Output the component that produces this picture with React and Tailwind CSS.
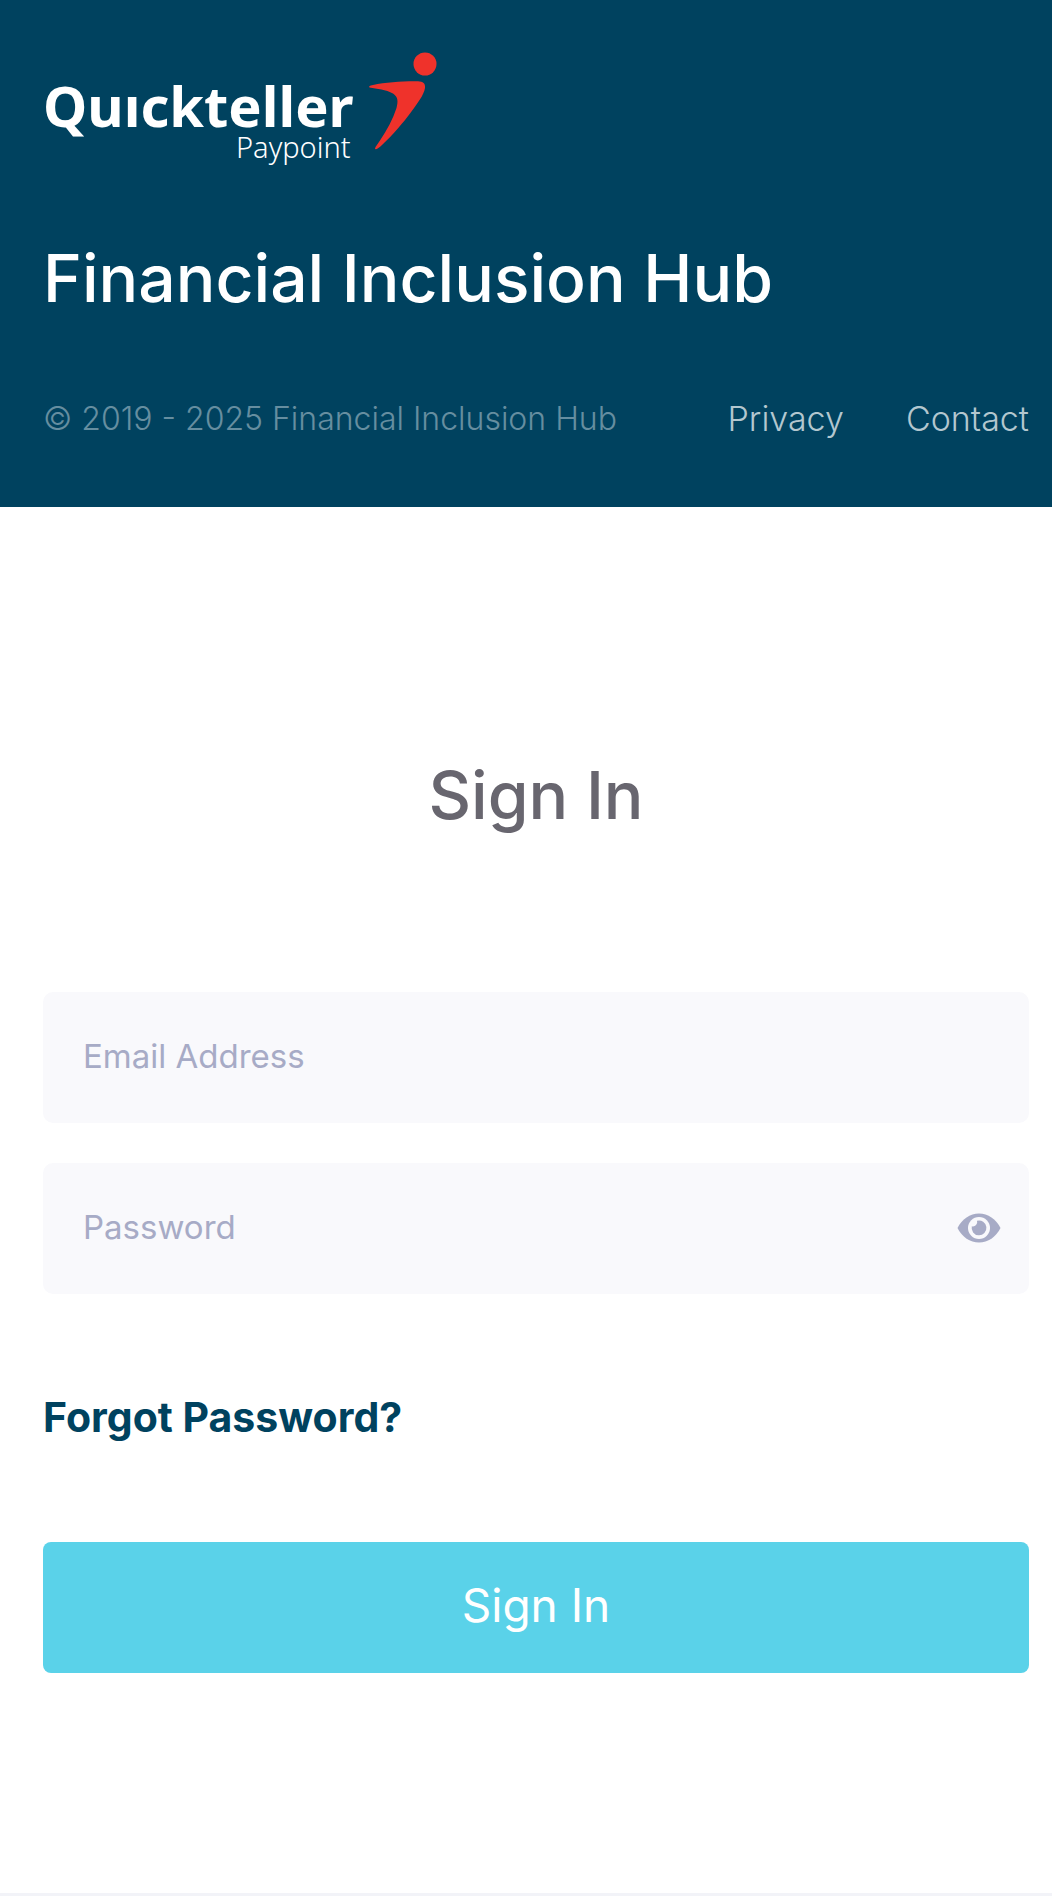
import { useState } from "react";

function Logo() {
  return (
    <svg viewBox="0 0 396 114" className="block h-[114px] w-[396px]" role="img" aria-label="Quickteller Paypoint">
      <text x="0" y="75" fill="#fff" fontFamily="'Noto Sans', sans-serif" fontWeight="700" fontSize="56">
        Quıckteller
      </text>
      <text x="193" y="106" fill="#fff" fontFamily="'Noto Sans', sans-serif" fontWeight="300" fontSize="29">
        Paypoint
      </text>
      <circle cx="382" cy="12" r="11.5" fill="#ef322b" />
      <path
        d="M326.5 35.5 C325.500 34.500 326.500 33.500 330 33 C343 30 360 29 375 29.200 C380 29.500 382.500 31 382 36 C381 43 374 52 367 61.500 C361 69.500 350 83 339 93 C335.500 96.500 332 98.500 332 96.500 C332.500 94.500 335 91.500 337 88.500 C344 78 350 67 353.500 56 C355 50 355.500 45 350 41.500 C343 37.500 334 37 326.500 35.500 Z"
        fill="#ef322b"
      />
    </svg>
  );
}

function EyeIcon() {
  return (
    <svg viewBox="0 0 44 30" className="block h-[30px] w-[44px]" aria-hidden="true">
      <path d="M.5 15 C5 6 13 .5 22 .5 S39 6 43.500 15 C39 24 31 29.500 22 29.500 S5 24 .5 15 Z" fill="#a7abc6" />
      <circle cx="22" cy="15" r="11" fill="#f9f9fc" />
      <path d="M20 7.800 A7.400 7.400 0 1 1 14.800 13.300 A4.300 4.300 0 0 0 20 7.800 Z" fill="#a7abc6" />
    </svg>
  );
}

const fieldClass =
  "block h-[131px] w-full rounded-[10px] bg-[#f9f9fc] pb-1 pl-10 text-[33px] text-[#3f4254] outline-none placeholder:text-[#a7abc6] placeholder:opacity-100";

export default function App() {
  const [visible, setVisible] = useState(false);
  return (
    <div className="min-h-screen bg-white font-['Inter',sans-serif]">
      <header className="bg-[#00425f] pt-[52px] pr-[23px] pb-16 pl-[43px]">
        <Logo />
        <h1 className="mt-[76px] text-[66px] leading-[72px] font-medium whitespace-nowrap text-white">
          Financial Inclusion Hub
        </h1>
        <div className="mt-[81px] flex items-center justify-between text-[32px] leading-[48px] font-light whitespace-nowrap">
          <span className="text-[#668ea0]">© 2019 - 2025 Financial Inclusion Hub</span>
          <nav className="flex gap-[62px] text-[34px] text-[#b3c7cf]">
            <a href="#privacy">Privacy</a>
            <a href="#contact">Contact</a>
          </nav>
        </div>
      </header>
      <main className="border-b-[3px] border-[#f2f3f8] pt-[252px] pr-[23px] pb-[220px] pl-[43px]">
        <h2 className="text-center text-[66px] leading-[72px] font-medium text-[#68666f]">Sign In</h2>
        <form className="mt-[161px]" onSubmit={(e) => e.preventDefault()}>
          <input type="email" aria-label="Email Address" placeholder="Email Address" className={fieldClass + " pr-10"} />
          <div className="relative mt-10">
            <input
              type={visible ? "text" : "password"}
              aria-label="Password"
              placeholder="Password"
              className={fieldClass + " pr-24"}
            />
            <button
              type="button"
              aria-label="Show password"
              aria-pressed={visible}
              onClick={() => setVisible(!visible)}
              className="absolute inset-y-0 right-7 flex items-center pb-0.5"
            >
              <EyeIcon />
            </button>
          </div>
          <a href="#forgot" className="mt-[99px] block w-fit text-[41px] leading-[48px] font-bold text-[#00425f]">
            Forgot Password?
          </a>
          <button type="submit" className="mt-[101px] block h-[131px] w-full rounded-lg bg-[#5ad2e9] pb-1 text-[46px] text-white">
            Sign In
          </button>
        </form>
      </main>
    </div>
  );
}
